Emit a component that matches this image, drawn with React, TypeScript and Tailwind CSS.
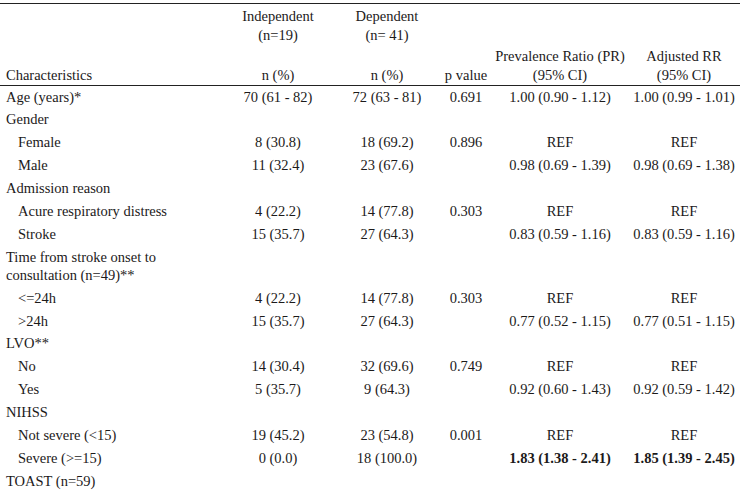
import * as React from 'react';

// Table rows: label, indent flag, then the five value columns
interface Row {
  label: React.ReactNode;
  sub?: boolean;
  cells?: string[];
  bold?: boolean;
}

const ROWS: Row[] = [
  { label: 'Age (years)*', cells: ['70 (61 - 82)', '72 (63 - 81)', '0.691', '1.00 (0.90 - 1.12)', '1.00 (0.99 - 1.01)'] },
  { label: 'Gender' },
  { label: 'Female', sub: true, cells: ['8 (30.8)', '18 (69.2)', '0.896', 'REF', 'REF'] },
  { label: 'Male', sub: true, cells: ['11 (32.4)', '23 (67.6)', '', '0.98 (0.69 - 1.39)', '0.98 (0.69 - 1.38)'] },
  { label: 'Admission reason' },
  { label: 'Acure respiratory distress', sub: true, cells: ['4 (22.2)', '14 (77.8)', '0.303', 'REF', 'REF'] },
  { label: 'Stroke', sub: true, cells: ['15 (35.7)', '27 (64.3)', '', '0.83 (0.59 - 1.16)', '0.83 (0.59 - 1.16)'] },
  {
    label: (
      <>
        Time from stroke onset to
        <br />
        consultation (n=49)**
      </>
    ),
  },
  { label: '<=24h', sub: true, cells: ['4 (22.2)', '14 (77.8)', '0.303', 'REF', 'REF'] },
  { label: '>24h', sub: true, cells: ['15 (35.7)', '27 (64.3)', '', '0.77 (0.52 - 1.15)', '0.77 (0.51 - 1.15)'] },
  { label: 'LVO**' },
  { label: 'No', sub: true, cells: ['14 (30.4)', '32 (69.6)', '0.749', 'REF', 'REF'] },
  { label: 'Yes', sub: true, cells: ['5 (35.7)', '9 (64.3)', '', '0.92 (0.60 - 1.43)', '0.92 (0.59 - 1.42)'] },
  { label: 'NIHSS' },
  { label: 'Not severe (<15)', sub: true, cells: ['19 (45.2)', '23 (54.8)', '0.001', 'REF', 'REF'] },
  { label: 'Severe (>=15)', sub: true, bold: true, cells: ['0 (0.0)', '18 (100.0)', '', '1.83 (1.38 - 2.41)', '1.85 (1.39 - 2.45)'] },
  { label: 'TOAST (n=59)' },
];

const GRID = 'grid grid-cols-[228px_100px_118px_40px_148px_100px]';

function Centered({ children, bold }: { children?: React.ReactNode; bold?: boolean }) {
  return (
    <div className={`flex justify-center whitespace-nowrap ${bold ? 'font-bold' : ''}`}>{children}</div>
  );
}

export default function App() {
  return (
    <div className="min-h-screen bg-white text-[#1c1a1a] text-[14.5px] font-['Liberation_Serif','Times_New_Roman',serif]">
      <div className="w-[740px] mt-[3px] border-t border-[#222]">
        {/* Header */}
        <div className={`${GRID} h-[82px] pt-[3px] pb-[1px] leading-[18.5px] border-b border-[#222]`}>
          <div className="flex items-end pl-[6px]">Characteristics</div>
          <div className="flex flex-col justify-between items-center whitespace-nowrap">
            <div className="text-center">
              Independent
              <br />
              (n=19)
            </div>
            <div>n (%)</div>
          </div>
          <div className="flex flex-col justify-between items-center whitespace-nowrap">
            <div className="text-center">
              Dependent
              <br />
              (n= 41)
            </div>
            <div>n (%)</div>
          </div>
          <div className="flex items-end justify-center whitespace-nowrap">p value</div>
          <div className="flex items-end justify-center whitespace-nowrap text-center">
            <div>
              Prevalence Ratio (PR)
              <br />
              (95% CI)
            </div>
          </div>
          <div className="flex items-end justify-center whitespace-nowrap text-center">
            <div>
              Adjusted RR
              <br />
              (95% CI)
            </div>
          </div>
        </div>

        {/* Body */}
        {ROWS.map((row, i) => (
          <div key={i} className={`${GRID} py-[2.5px] leading-[17.9px]`}>
            <div className={row.sub ? 'pl-[18px]' : 'pl-[6px]'}>{row.label}</div>
            {row.cells?.map((c, j) => (
              <Centered key={j} bold={row.bold && j >= 3}>
                {c}
              </Centered>
            ))}
          </div>
        ))}
      </div>
    </div>
  );
}
